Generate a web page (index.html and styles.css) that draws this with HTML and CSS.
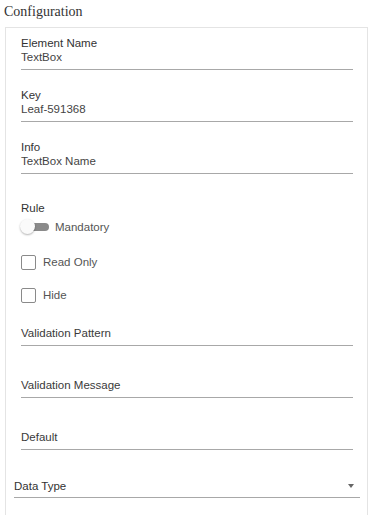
FILE: index.html
```html
<!DOCTYPE html>
<html lang="en">
<head>
    <meta charset="UTF-8">
    <meta name="viewport" content="width=device-width, initial-scale=1.0">
    <title>Configuration</title>
    <link rel="stylesheet" href="styles.css">
</head>
<body>
    <h1 class="title">Configuration</h1>
    <div class="panel">
        <div class="field">
            <label>Element Name</label>
            <div class="value">TextBox</div>
        </div>
        <div class="field">
            <label>Key</label>
            <div class="value">Leaf-591368</div>
        </div>
        <div class="field">
            <label>Info</label>
            <div class="value">TextBox Name</div>
        </div>

        <div class="rule">
            <label>Rule</label>
            <div class="toggle-row">
                <span class="toggle"><span class="knob"></span></span>
                <span>Mandatory</span>
            </div>
        </div>

        <div class="check-row"><span class="checkbox"></span>Read Only</div>
        <div class="check-row last"><span class="checkbox"></span>Hide</div>

        <div class="field empty">Validation Pattern</div>
        <div class="field empty">Validation Message</div>
        <div class="field empty">Default</div>

        <div class="select">
            <span>Data Type</span>
            <span class="caret"></span>
        </div>
    </div>
</body>
</html>
```

FILE: styles.css
```css
body {
    margin: 0;
    background-color: #fff;
    font-family: "Liberation Sans", Arial, sans-serif;
    font-size: 11.5px;
    color: #3a3a3a;
}
.title {
    font-family: "Liberation Serif", "Times New Roman", serif;
    font-weight: normal;
    font-size: 14px;
    line-height: 16px;
    color: #333;
    margin: 0;
    padding: 4px 0 0 4px;
    height: 23px;
}
.panel {
    box-sizing: border-box;
    margin-left: 5px;
    width: 363px;
    border: 1px solid #e4e4e4;
    border-bottom: none;
    padding: 8px 14px 30px 15px;
}
.field {
    border-bottom: 1px solid #a8a8a8;
    padding-bottom: 5px;
    margin-bottom: 18px;
    line-height: 14px;
}
.field label,
.rule label {
    display: block;
    color: #333;
}
.value {
    color: #444;
}
.field.empty {
    margin-bottom: 32px;
}
.rule {
    margin-top: 27px;
    line-height: 14px;
}
.toggle-row {
    display: flex;
    align-items: center;
    gap: 6px;
    margin-top: 5px;
    height: 14px;
    color: #555;
}
.toggle {
    position: relative;
    width: 26px;
    height: 8px;
    margin-left: 2px;
    background-color: #8a8a8a;
    border-radius: 4px;
}
.knob {
    position: absolute;
    left: -3px;
    top: -4px;
    width: 15px;
    height: 15px;
    border-radius: 50%;
    background-color: #fafafa;
    box-shadow: 0 1px 2px rgba(0, 0, 0, 0.3);
}
.check-row {
    display: flex;
    align-items: center;
    gap: 7px;
    height: 16px;
    margin-top: 20px;
    color: #555;
}
.check-row + .check-row {
    margin-top: 17px;
}
.check-row.last {
    margin-bottom: 23px;
}
.checkbox {
    width: 13px;
    height: 13px;
    border: 1px solid #8a8a8a;
    border-radius: 2px;
}
.select {
    display: flex;
    justify-content: space-between;
    align-items: center;
    margin: -3px -7px 0 -7px;
    padding-bottom: 4px;
    border-bottom: 1px solid #a8a8a8;
    line-height: 14px;
    color: #333;
}
.caret {
    width: 0;
    height: 0;
    margin-right: 6px;
    border-left: 3.5px solid transparent;
    border-right: 3.5px solid transparent;
    border-top: 4px solid #666;
}
```
